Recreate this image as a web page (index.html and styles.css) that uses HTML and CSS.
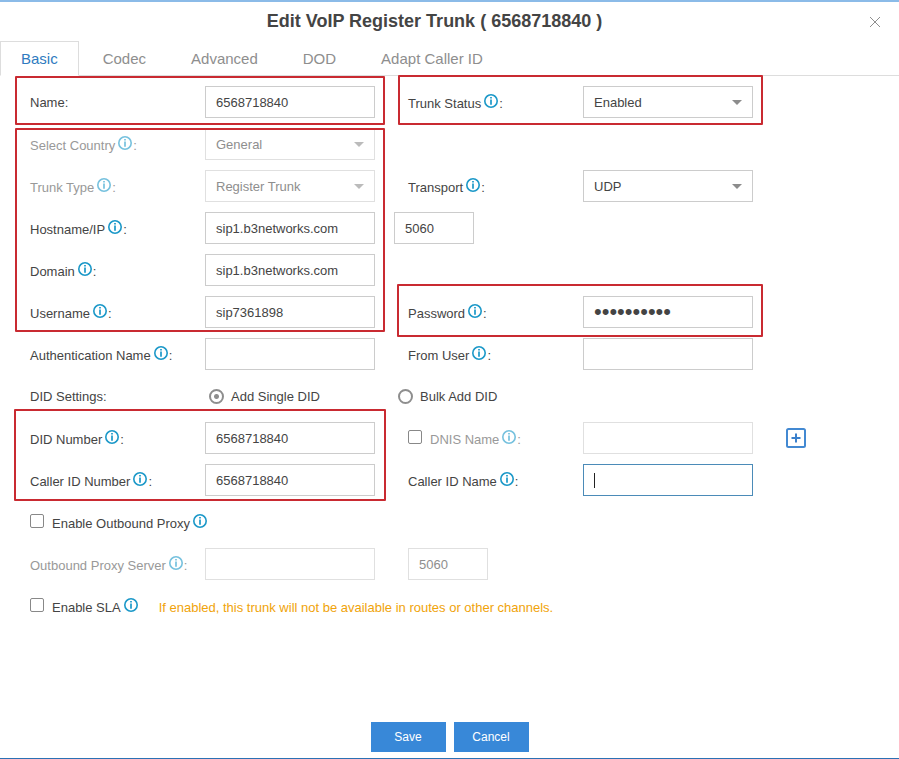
FILE: index.html
```html
<!DOCTYPE html>
<html lang="en">
<head>
<meta charset="utf-8">
<title>Edit VoIP Register Trunk</title>
<link rel="stylesheet" href="styles.css">
</head>
<body>
<svg class="sprite" aria-hidden="true">
  <symbol id="info" viewBox="0 0 14 14">
    <circle cx="7" cy="7" r="6.2" fill="none" stroke="currentColor" stroke-width="1.6"/>
    <path d="M7 5.4V10.8M7 3V4.5" fill="none" stroke="currentColor" stroke-width="1.7"/>
  </symbol>
</svg>
<main class="dialog">
  <header class="header">
    <h1 class="title">Edit VoIP Register Trunk ( 6568718840 )</h1>
    <button class="close" type="button" aria-label="Close"><svg width="12" height="12" viewBox="0 0 12 12"><path d="M1 1L11 11M11 1L1 11" stroke="#8e8e8e" fill="none"/></svg></button>
  </header>
  <nav class="tabs">
    <a class="tab active" href="#basic">Basic</a>
    <a class="tab" href="#codec">Codec</a>
    <a class="tab" href="#advanced">Advanced</a>
    <a class="tab" href="#dod">DOD</a>
    <a class="tab" href="#adapt">Adapt Caller ID</a>
  </nav>
  <form class="form" id="basic">
    <label class="label r1 c1" for="name">Name:</label>
    <input class="field r1 c2" id="name" type="text" value="6568718840">
    <label class="label tip r1 c4" for="status">Trunk Status<svg class="info"><use href="#info"/></svg>:</label>
    <span class="select r1 c5"><select class="field" id="status"><option>Enabled</option><option>Disabled</option></select></span>

    <label class="label tip off r2 c1" for="country">Select Country<svg class="info"><use href="#info"/></svg>:</label>
    <span class="select off r2 c2"><select class="field" id="country" disabled><option>General</option></select></span>

    <label class="label tip off r3 c1" for="type">Trunk Type<svg class="info"><use href="#info"/></svg>:</label>
    <span class="select off r3 c2"><select class="field" id="type" disabled><option>Register Trunk</option></select></span>
    <label class="label tip r3 c4" for="transport">Transport<svg class="info"><use href="#info"/></svg>:</label>
    <span class="select r3 c5"><select class="field" id="transport"><option>UDP</option><option>TCP</option></select></span>

    <label class="label tip r4 c1" for="host">Hostname/IP<svg class="info"><use href="#info"/></svg>:</label>
    <input class="field r4 c2" id="host" type="text" value="sip1.b3networks.com">
    <input class="field port host-port r4" type="text" value="5060" aria-label="Port">

    <label class="label tip r5 c1" for="domain">Domain<svg class="info"><use href="#info"/></svg>:</label>
    <input class="field r5 c2" id="domain" type="text" value="sip1.b3networks.com">

    <label class="label tip r6 c1" for="user">Username<svg class="info"><use href="#info"/></svg>:</label>
    <input class="field r6 c2" id="user" type="text" value="sip7361898">
    <label class="label tip r6 c4" for="pass">Password<svg class="info"><use href="#info"/></svg>:</label>
    <input class="field password r6 c5" id="pass" type="password" value="0123456789">

    <label class="label tip r7 c1" for="auth">Authentication Name<svg class="info"><use href="#info"/></svg>:</label>
    <input class="field r7 c2" id="auth" type="text">
    <label class="label tip r7 c4" for="from">From User<svg class="info"><use href="#info"/></svg>:</label>
    <input class="field r7 c5" id="from" type="text">

    <span class="label r8 c1">DID Settings:</span>
    <label class="choice single r8"><input class="radio" type="radio" name="did" checked>Add Single DID</label>
    <label class="choice bulk r8"><input class="radio" type="radio" name="did">Bulk Add DID</label>

    <label class="label tip r9 c1" for="didnum">DID Number<svg class="info"><use href="#info"/></svg>:</label>
    <input class="field r9 c2" id="didnum" type="text" value="6568718840">
    <label class="label tip off r9 c4"><input class="check" type="checkbox">DNIS Name<svg class="info"><use href="#info"/></svg>:</label>
    <input class="field r9 c5" type="text" aria-label="DNIS Name" disabled>
    <button class="add r9" type="button" aria-label="Add DID"><svg width="20" height="20" viewBox="0 0 20 20"><rect x="1" y="1" width="18" height="18" rx="1.5" fill="none" stroke="#4389d2" stroke-width="2"/><path d="M10 5.5V14.5M5.5 10H14.5" stroke="#3a80cc" stroke-width="2"/></svg></button>

    <label class="label tip r10 c1" for="cidnum">Caller ID Number<svg class="info"><use href="#info"/></svg>:</label>
    <input class="field r10 c2" id="cidnum" type="text" value="6568718840">
    <label class="label tip r10 c4" for="cidname">Caller ID Name<svg class="info"><use href="#info"/></svg>:</label>
    <span class="editing r10 c5"><input class="field" id="cidname" type="text"></span>

    <label class="label tip wide r11"><input class="check" type="checkbox">Enable Outbound Proxy<svg class="info"><use href="#info"/></svg></label>

    <label class="label tip off r12 c1" for="proxy">Outbound Proxy Server<svg class="info"><use href="#info"/></svg>:</label>
    <input class="field r12 c2" id="proxy" type="text" disabled>
    <input class="field port r12 c4" type="text" value="5060" aria-label="Proxy port" disabled>

    <div class="label tip wide r13"><label><input class="check" type="checkbox">Enable SLA<svg class="info"><use href="#info"/></svg></label><span class="note">If enabled, this trunk will not be available in routes or other channels.</span></div>

    <span class="mark mark-name"></span>
    <span class="mark mark-status"></span>
    <span class="mark mark-account"></span>
    <span class="mark mark-password"></span>
    <span class="mark mark-did"></span>
  </form>
  <footer class="footer">
    <button class="button" type="button">Save</button>
    <button class="button" type="button">Cancel</button>
  </footer>
</main>
</body>
</html>
```
FILE: styles.css
```css
* { box-sizing: border-box; }
body { margin: 0; font: 13px "Liberation Sans", Arial, sans-serif; color: #444; background: #fff; }
.sprite { display: none; }
.dialog { display: flex; flex-direction: column; min-height: 100vh; border-top: 2px solid #8bbbe8; border-bottom: 1px solid #2b71b4; }

.header { display: flex; align-items: center; height: 39px; padding: 0 14px 0 0; }
.title { flex: 1; margin: 0 0 0 4px; font-size: 18px; line-height: 36px; height: 38px; text-align: center; }
.close { display: flex; padding: 4px; border: 0; background: none; }

.tabs { display: flex; height: 35px; border-bottom: 1px solid #ddd; }
.tab { height: 35px; padding: 0 21px 0 24px; font-size: 15px; line-height: 36px; color: #8e8e8e; text-decoration: none; }
.tab.active { padding: 0 20px; border: 1px solid #ddd; border-bottom-color: #fff; line-height: 34px; color: #2f7bc0; background: #fff; }

.form { display: grid; grid-template-columns: 175px 170px 33px 175px 170px 33px 1fr; grid-auto-rows: 32px; row-gap: 10px; padding: 10px 30px 0; }
.c1 { grid-column: 1; }
.c2 { grid-column: 2; }
.c4 { grid-column: 4; }
.c5 { grid-column: 5; }
.r1 { grid-row: 1; }
.r2 { grid-row: 2; }
.r3 { grid-row: 3; }
.r4 { grid-row: 4; }
.r5 { grid-row: 5; }
.r6 { grid-row: 6; }
.r7 { grid-row: 7; }
.r8 { grid-row: 8; }
.r9 { grid-row: 9; }
.r10 { grid-row: 10; }
.r11 { grid-row: 11; }
.r12 { grid-row: 12; }
.r13 { grid-row: 13; }

.label { line-height: 34px; white-space: nowrap; }
.label.tip { line-height: 36px; }
.label.off { color: #999; }
.wide { grid-column: 1 / -1; }
.info { width: 14px; height: 14px; margin: 0 1px 0 3px; vertical-align: 0; color: #1b98c8; }
.off .info { color: #76c1de; }
.note { margin-left: 20px; color: #f0a30a; }

.field { width: 100%; height: 32px; padding: 0 10px; border: 1px solid #ccc; border-radius: 0; outline: 0; font: inherit; color: #444; background: #fff; }
.field:disabled { border-color: #e0e0e0; color: #8e8e8e; opacity: 1; }
.password { font-size: 22px; }
.port { width: 80px; }
.host-port { grid-column: 3 / span 2; margin-left: 19px; }

.select { position: relative; }
.select .field { appearance: none; }
.select::after { content: ""; position: absolute; top: 14px; right: 11px; border: 5px solid transparent; border-top-color: #8c8c8c; border-bottom: 0; pointer-events: none; }
.select.off::after { border-top-color: #bbb; }

.editing { position: relative; }
.editing .field { border-color: #4b8bb8; }
.editing::after { content: ""; position: absolute; top: 9px; left: 11px; width: 1px; height: 15px; background: #222; pointer-events: none; }

.choice { display: flex; align-items: center; gap: 7px; white-space: nowrap; }
.single { grid-column: 2; margin-left: 4px; }
.bulk { grid-column: 3 / span 2; margin-left: 23px; }
.radio { appearance: none; width: 15px; height: 15px; margin: 0; border: 2px solid #8e8e8e; border-radius: 50%; }
.radio:checked { background: radial-gradient(circle, #8e8e8e 2px, transparent 3px); }
.check { appearance: none; width: 14px; height: 14px; margin: 0 8px 0 0; border: 1px solid #888; border-radius: 2px; vertical-align: 0; background: #fff; }
.add { grid-column: 7; place-self: center start; display: flex; padding: 0; border: 0; background: none; }

.mark { z-index: 1; border: 2px solid #c92a31; border-radius: 1px; pointer-events: none; }
.mark-name { grid-area: 1 / 1 / 2 / 3; margin: -10px -10px -7px -15px; }
.mark-status { grid-area: 1 / 4 / 2 / 6; margin: -11px -10px -7px; }
.mark-account { grid-area: 2 / 1 / 7 / 3; margin: 0 -10px -4px -15px; }
.mark-password { grid-area: 6 / 4 / 7 / 6; margin: -12px -10px -9px -11px; }
.mark-did { grid-area: 9 / 1 / 11 / 3; margin: -13px -11px -5px -16px; }

.footer { display: flex; justify-content: center; gap: 8px; margin-top: auto; padding: 12px 0 6px; }
.button { width: 75px; height: 30px; padding: 0; border: 0; font: 12px "Liberation Sans", Arial, sans-serif; color: #fff; background: #3888d8; }
```
